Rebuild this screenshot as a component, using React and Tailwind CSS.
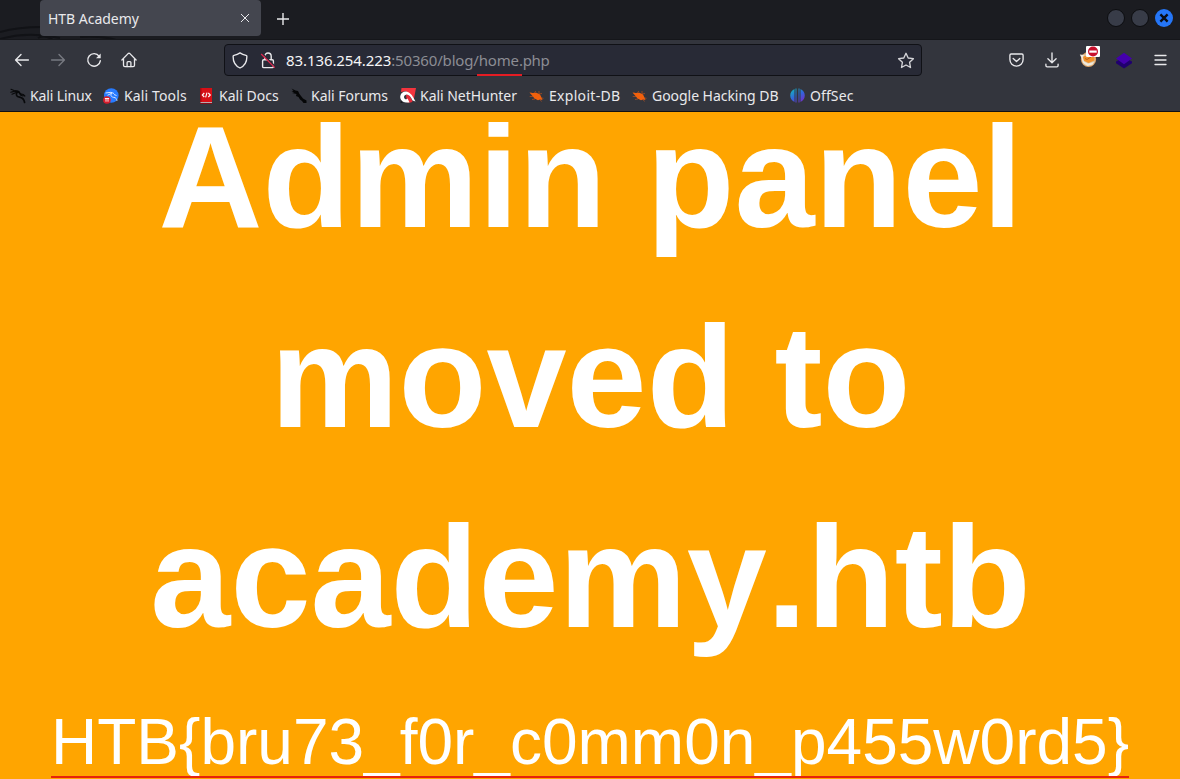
import React from "react";

const BackIcon = () => (
  <svg width="16" height="16" viewBox="0 0 16 16" fill="none" stroke="currentColor" strokeWidth="1.4" strokeLinecap="round" strokeLinejoin="round">
    <path d="M14.4 8H1.8M7 2.6 1.6 8 7 13.4" />
  </svg>
);

const ForwardIcon = () => (
  <svg width="16" height="16" viewBox="0 0 16 16" fill="none" stroke="currentColor" strokeWidth="1.4" strokeLinecap="round" strokeLinejoin="round">
    <path d="M1.6 8h12.6M9 2.6 14.4 8 9 13.4" />
  </svg>
);

const ReloadIcon = () => (
  <svg width="16" height="16" viewBox="0 0 16 16" fill="none" stroke="currentColor" strokeWidth="1.4" strokeLinecap="round">
    <path d="M13.2 4.3A6.3 6.3 0 1 0 14.3 8.8" />
    <path d="M14.7 1.6v4.6H10z" fill="currentColor" stroke="none" />
  </svg>
);

const HomeIcon = () => (
  <svg width="16" height="16" viewBox="0 0 16 16" fill="none" stroke="currentColor" strokeWidth="1.3" strokeLinecap="round" strokeLinejoin="round">
    <path d="M.9 8 7.1 1.6q.9-.8 1.8 0L15.1 8M2.5 7v6.3q0 1.4 1.4 1.4h8.2q1.4 0 1.4-1.4V7" />
    <path d="M6.1 14.5v-4q0-.9.9-.9h2q.9 0 .9.9v4" />
  </svg>
);

const ShieldIcon = () => (
  <svg width="16" height="17" viewBox="0 0 16 17" fill="none" stroke="currentColor" strokeWidth="1.35" strokeLinejoin="round">
    <path d="M8 .9c1.700 1.200 3.700 2 6 2.400q.9.2.9 1.200C14.900 10 12.500 14 8 16 3.500 14 1.100 10 1.100 4.500q0-1 .9-1.200C4.300 2.900 6.300 2.100 8 .9z" />
  </svg>
);

const LockIcon = () => (
  <svg width="16" height="17" viewBox="0 0 16 17" fill="none" stroke="#e9e9ec" strokeWidth="1.4">
    <path d="M4.800 7V4.200a3.200 3.200 0 0 1 6.400 0V7M3.800 7.700h8.400q1.200 0 1.200 1.200v5.500q0 1.200-1.200 1.200H3.800q-1.200 0-1.200-1.200V8.900q0-1.200 1.200-1.200z" />
    <path d="M1.800 1 15.800 15.200" stroke="#282a36" strokeWidth="1.500" />
    <path d="M1.200 2 14.700 15.600" stroke="#e22850" strokeWidth="1.300" />
  </svg>
);

const StarIcon = () => (
  <svg width="18" height="17" viewBox="0 0 18 17" fill="none" stroke="#d4d4d8" strokeWidth="1.35" strokeLinejoin="round">
    <path d="m9 1.300 2.200 4.700 5.200.7-3.800 3.600.9 5.200L9 13l-4.500 2.500.9-5.200L1.600 6.700l5.200-.7z" />
  </svg>
);

const PocketIcon = () => (
  <svg width="15" height="14" viewBox="0 0 15 14" fill="none" stroke="currentColor" strokeWidth="1.35" strokeLinecap="round" strokeLinejoin="round">
    <path d="M2.100 1h10.800q1.200 0 1.200 1.200v4.300a6.600 6.600 0 0 1-13.200 0V2.200Q.9 1 2.100 1z" />
    <path d="m4.200 5.500 3.300 3.100 3.300-3.100" />
  </svg>
);

const DownloadIcon = () => (
  <svg width="14" height="16" viewBox="0 0 14 16" fill="none" stroke="currentColor" strokeWidth="1.35" strokeLinecap="round" strokeLinejoin="round">
    <path d="M7 .9v9.600M2.900 6.800 7 10.800l4.100-4M.9 12.200v1.300q0 1.300 1.300 1.300h9.600q1.300 0 1.300-1.300v-1.300" />
  </svg>
);

const FoxIcon = () => (
  <svg width="22" height="23" viewBox="0 0 22 23">
    <circle cx="9.500" cy="13.500" r="7.600" fill="#e2a467" />
    <circle cx="9.500" cy="13.500" r="6.600" fill="#d9c3a2" />
    <path d="m4 10.500 11.500-3v7L9.500 17l-5-2.500z" fill="#f2922c" />
    <path d="M.8 8.500 5 9 3.800 11.500l1.200 4 4 2 6-1.500-1.500 2.500-5 1.500-4.500-3-1.500-5z" fill="#f1eadd" />
    <path d="m6 12.500 2 1 4-2.500" stroke="#b75b14" strokeWidth=".9" fill="none" />
    <rect x="7" width="14" height="11" rx="1" fill="#fff" />
    <circle cx="14" cy="5.500" r="5" fill="#c8102e" />
    <rect x="10.300" y="4.500" width="7.400" height="2.200" fill="#fff" />
  </svg>
);

const LayersIcon = () => (
  <svg width="16" height="17" viewBox="0 0 16 17">
    <path d="M0 9.500 8 5l8 4.500v1.700L8 16.600 0 11.200z" fill="#20006e" />
    <path d="m8 .8 8 5.700-8 5.700-8-5.700z" fill="#4400ad" />
  </svg>
);

const MenuIcon = () => (
  <svg width="13" height="12" viewBox="0 0 13 12" stroke="currentColor" strokeWidth="1.300" strokeLinecap="round">
    <path d="M1 1.500h11M1 6h11M1 10.500h11" />
  </svg>
);

const DragonIcon = () => (
  <svg width="16" height="16" viewBox="0 0 16 16" fill="none" stroke="#08090b" strokeLinecap="round">
    <path d="M1 1.200 4 2.500 8 3 9.500 4.500M.8 4.300 4 3.400M2 6.300 5 5 8.500 4" strokeWidth="1.100" />
    <path d="M5 3.400 9 4.200 10.500 6.300M7 4.300C5.500 7 6.700 8.700 9.600 9.100s4.300 1.500 5 5.400" strokeWidth="1.700" />
    <path d="M10.200 5.900 13.300 6.500 14.800 8M10.500 7l2.500 1" strokeWidth="1.200" />
  </svg>
);

const ToolsIcon = () => (
  <svg width="16" height="16" viewBox="0 0 16 16">
    <circle cx="8.300" cy="7.500" r="7.300" fill="#277bff" />
    <path d="M2.500 5 8 4.300l3 1.200M4.500 7.300 9 5M8.500 5.300c-1.500 3 .5 3.800 2.500 4.100s2.800 1.600 3 3.400M11 6.500l2.500 1" fill="none" stroke="#d4e4ff" strokeWidth="1" />
    <circle cx="3.900" cy="12" r="3.800" fill="#d91c2b" />
    <path d="M1.900 10.500h4.200M3 10.500v3.200M5 10.500v3.200" stroke="#fff" strokeWidth=".9" />
  </svg>
);

const DocsIcon = () => (
  <svg width="14" height="16" viewBox="0 0 14 16">
    <path d="M1 0h12v14H1z" fill="#d70f16" />
    <path d="M1 0h1.500v14H1z" fill="#a50b12" />
    <path d="M1.500 14h11.500v1H1.500z" fill="#b9a9ad" />
    <path d="M1 15h12v1H1z" fill="#82101b" />
    <path d="M5.300 5 3.300 7l2 2M9.300 5l2 2-2 2M8 4.700 6.600 9.300" fill="none" stroke="#fff" strokeWidth="1.100" />
  </svg>
);

const ForumsIcon = () => (
  <svg width="16" height="16" viewBox="0 0 16 16" fill="#050607">
    <path d="m.5.500 4 2L7 3l1.500 3L10 8l2 2.500 3.500 2V15h-3L11 13 9 11.500 7.500 9 5 8l.5-2L1 5l2-.5L.5 3l2-.2z" />
  </svg>
);

const NetHunterIcon = () => (
  <svg width="16" height="15" viewBox="0 0 16 15">
    <path d="M1.500 0H16l-2.300 12L11 9 6 3 1 4z" fill="#f4343d" />
    <path d="M6 6.500c3-.5 5 2.500 6.500 7L11 14.500H7z" fill="#e52b38" />
    <path d="M.3 8C1 4.500 4 3 7 3.700c3.800.8 6 4.800 8.500 9.800l-3-1C11 8.500 8.500 6.300 6.500 6.500 4 7 3.500 9 4.500 10.400c1 1.300 2.800 1 3-.2L9.500 14.500H6C2.500 14.200-.3 11.500.3 8z" fill="#fff" />
    <path d="M1 12.500 3 15H.5z" fill="#17191c" />
  </svg>
);

const BugIcon = () => (
  <svg width="15" height="14" viewBox="0 0 15 14">
    <path d="M1.500 4 5 5l1.700-3M10 2v3l3-.5M12.500 9l2 .3M11 10.500l1.500 2M6 10l-3 .5M4 7.500H.7" fill="none" stroke="#a84c20" strokeWidth=".8" />
    <path d="M.5 3.500 3.500 4 7.500 3.700l3.500 1.800 1.500 3 1 2.500-2.500-.5-2 .7-3.500-1.700L3.500 7z" fill="#f2600c" />
  </svg>
);

const OffSecIcon = () => (
  <svg width="15" height="15" viewBox="0 0 15 15">
    <defs>
      <linearGradient id="offsec" gradientUnits="userSpaceOnUse" x1="1" y1="1" x2="10" y2="15">
        <stop offset="0" stopColor="#12b9bd" />
        <stop offset=".55" stopColor="#3265dc" />
        <stop offset="1" stopColor="#7130c9" />
      </linearGradient>
    </defs>
    <path d="M4.500 1v13C-1.200 11.500-1.200 3.500 4.500 1zM5.500.5H6.500v14H5.500zM8.500.5h1v14h-1zM10.500 1c5.700 2.500 5.700 10.500 0 13z" fill="url(#offsec)" />
  </svg>
);

const bookmarks = [
  { label: "Kali Linux", Icon: DragonIcon, box: "w-[94px]", icon: "", text: "tracking-[-0.12px]" },
  { label: "Kali Tools", Icon: ToolsIcon, box: "w-[95px]", icon: "-ml-px mr-px", text: "tracking-[0.13px]" },
  { label: "Kali Docs", Icon: DocsIcon, box: "w-[92px]", icon: "-ml-px mr-px", text: "tracking-[0.03px]" },
  { label: "Kali Forums", Icon: ForumsIcon, box: "w-[109px]", icon: "", text: "tracking-[-0.03px]" },
  { label: "Kali NetHunter", Icon: NetHunterIcon, box: "w-[129px]", icon: "", text: "tracking-[-0.03px]" },
  { label: "Exploit-DB", Icon: BugIcon, box: "w-[103px]", icon: "-ml-px mr-px", text: "tracking-[0.3px]" },
  { label: "Google Hacking DB", Icon: BugIcon, box: "w-[158px]", icon: "-ml-px mr-px", text: "tracking-[-0.04px]" },
  { label: "OffSec", Icon: OffSecIcon, box: "w-[80px]", icon: "-ml-px mr-px", text: "tracking-[0.1px]" },
];

function TabBar() {
  return (
    <div className="relative flex h-10 shrink-0 items-start overflow-hidden border-b border-[#15161a] bg-[#1b1c21]">
      <svg className="absolute left-0 top-0" width="140" height="40" fill="none" stroke="#111216" strokeWidth="2">
        <path d="M0 32Q18 27 42 27M0 39Q28 31 60 38M38 38q7-4 15 2M80 37q24-1 36 3" />
      </svg>
      <div className="relative ml-10 flex h-9 w-[221px] items-center justify-between rounded-[4px] bg-[#44464f] pl-2 pr-[11px]">
        <span className="text-[14px] tracking-[-0.03px]">HTB Academy</span>
        <svg width="10" height="10" viewBox="0 0 10 10" stroke="currentColor" strokeWidth="1">
          <path d="m1 1 8 8M9 1 1 9" />
        </svg>
      </div>
      <svg className="ml-[15px] mt-3" width="14" height="14" viewBox="0 0 14 14" stroke="currentColor" strokeWidth="1.400">
        <path d="M1 7h12M7 1v12" />
      </svg>
      <div className="ml-auto mr-[7px] mt-[9px] flex gap-[6px]">
        <span className="h-[18px] w-[18px] rounded-full border border-[#0c0d10] bg-[#383c48]" />
        <span className="h-[18px] w-[18px] rounded-full border border-[#0c0d10] bg-[#383c48]" />
        <svg width="18" height="18" viewBox="0 0 18 18">
          <circle cx="9" cy="9" r="9" fill="#2576f7" />
          <path d="m5.400 5.400 7.200 7.200M12.600 5.400l-7.200 7.200" stroke="#0b0d13" strokeWidth="2.400" />
        </svg>
      </div>
    </div>
  );
}

function Toolbar() {
  return (
    <div className="flex h-10 shrink-0 items-center">
      <div className="ml-[14px] flex gap-5">
        <BackIcon />
        <span className="text-[#777981]"><ForwardIcon /></span>
        <ReloadIcon />
        <span className="-ml-px"><HomeIcon /></span>
      </div>
      <div className="ml-[87px] flex h-8 w-[698px] items-center rounded-[4px] border border-[#101116] bg-[#282a36] pl-[7px] pr-[6px]">
        <ShieldIcon />
        <span className="ml-3"><LockIcon /></span>
        <div className="ml-[10px] whitespace-nowrap text-[15px] leading-5 text-[#8c8d94]">
          <span className="tracking-[-0.09px] text-[#f5f5f6]">83.136.254.223</span>
          <span className="tracking-[-0.16px]">:50360/blog/</span>
          <span className="relative tracking-[-0.18px]">
            home
            <span className="absolute -left-[2px] top-[24px] h-[2px] w-[45px] bg-[#e51c23]" />
          </span>
          <span className="tracking-[-0.26px]">.php</span>
        </div>
        <span className="ml-auto"><StarIcon /></span>
      </div>
      <div className="ml-auto mr-[13px] flex items-center">
        <PocketIcon />
        <span className="ml-[21px]"><DownloadIcon /></span>
        <span className="-mt-[5px] ml-[20px]"><FoxIcon /></span>
        <span className="ml-[15px]"><LayersIcon /></span>
        <span className="ml-[22px]"><MenuIcon /></span>
      </div>
    </div>
  );
}

function Bookmarks() {
  return (
    <div className="flex h-8 shrink-0 items-center border-b border-[#101013] pl-[10px]">
      {bookmarks.map(({ label, Icon, box, icon, text }) => (
        <div key={label} className={"flex shrink-0 items-center gap-1 whitespace-nowrap text-[14px] " + box}>
          <span className={"flex w-4 shrink-0 justify-center " + icon}><Icon /></span>
          <span className={text}>{label}</span>
        </div>
      ))}
    </div>
  );
}

export default function App() {
  return (
    <div className="flex h-[779px] w-[1180px] flex-col overflow-hidden bg-[#33353d] font-['Noto_Sans',sans-serif] text-[#e9e9ec]">
      <TabBar />
      <Toolbar />
      <Bookmarks />
      <main className="flex-1 overflow-hidden bg-[#ffa500] text-center font-['Liberation_Sans',Arial,sans-serif] text-white [font-kerning:none]">
        <h1 className="-mt-[34px] pl-px text-[144px] font-bold leading-[200px]">
          Admin panel
          <br />
          moved to
          <br />
          academy.htb
        </h1>
        <p className="mt-[27px] text-[64px] leading-[74px]">
          <span className="relative inline-block">
            HTB{"{"}bru73_f0r_c0mm0n_p455w0rd5{"}"}
            <span className="absolute left-0 top-[71px] h-[2px] w-full bg-[#e7230b]" />
          </span>
        </p>
      </main>
    </div>
  );
}
